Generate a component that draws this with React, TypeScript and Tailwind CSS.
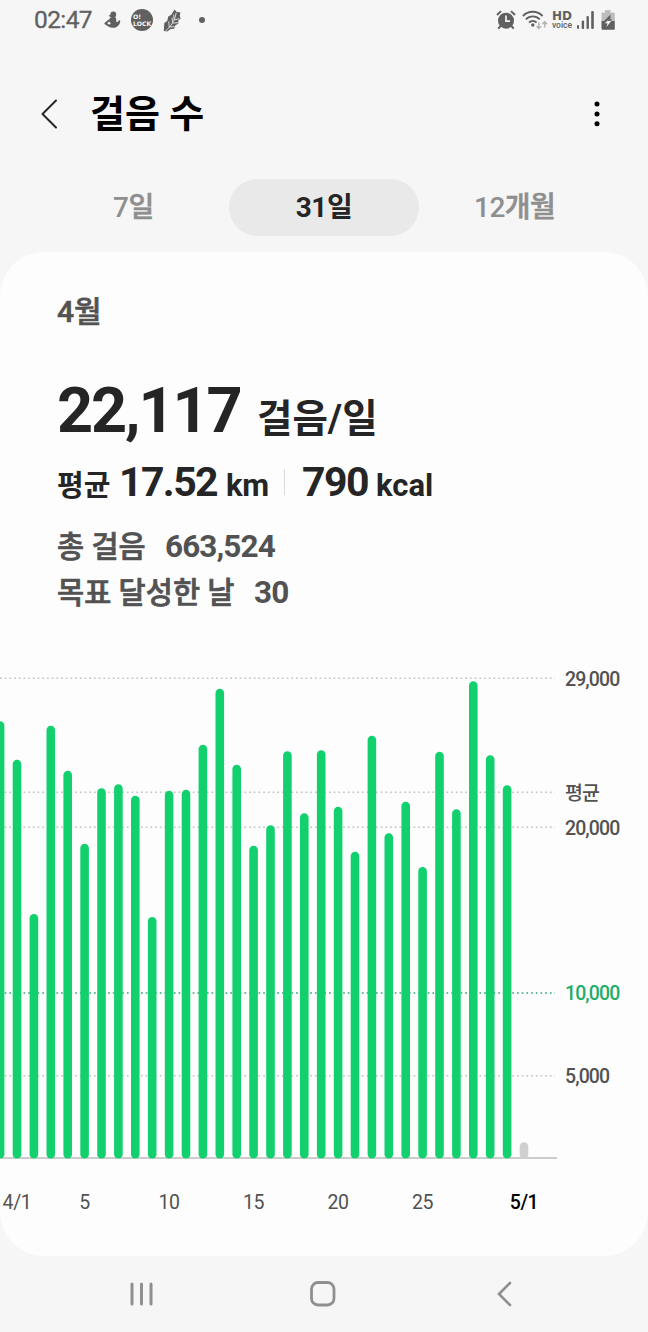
import { cx } from "class-variance-authority"

const TABS = [
  { count: "7", unit: "일" },
  { count: "31", unit: "일" },
  { count: "12", unit: "개월" },
]

// the first entry is March 31st, cut off by the left edge
const STEPS = [
  26400, 24080, 14770, 26130, 23410, 19000, 22360, 22600, 21900, 14590, 22210,
  22270, 24980, 28370, 23780, 18880, 20120, 24590, 20850, 24650, 21240, 18520,
  25530, 19640, 21540, 17610, 24560, 21090, 28820, 24350, 22540,
]

const GRID = [
  { value: 29000, label: "29,000" },
  { value: 22117, label: "평균" },
  { value: 20000, label: "20,000" },
  { value: 10000, label: "10,000", goal: true },
  { value: 5000, label: "5,000" },
]

const DAYS = [
  { day: 1, label: "4/1" },
  { day: 5, label: "5" },
  { day: 10, label: "10" },
  { day: 15, label: "15" },
  { day: 20, label: "20" },
  { day: 25, label: "25" },
  { day: 31, label: "5/1", current: true },
]

const BASE = 518.5
const dayX = (day: number) => 0.1 + day * 16.9
const stepY = (steps: number) => BASE - steps * 0.01656

function StatusBar() {
  return (
    <div className="flex h-10 items-center justify-between pr-[33px] pl-[34px] text-[#606060]">
      <div className="flex items-center">
        <span className="w-[70px] text-[24.5px] leading-10 tracking-[-0.6px] [-webkit-text-stroke:0.3px]">02:47</span>
        <svg className="h-[18px] w-[17px]" viewBox="0 0 17 18" fill="currentColor">
          <circle cx="9.3" cy="3.4" r="2.9" />
          <path d="M6.6 6.2 11 5.8c1.3 1.7 1.6 3.4 1.2 5 1.1.8 2.200-.1 2.600-1.500l1.400.3c.2 3-1.300 5-3.600 6.300-2.100 1.100-5.300 1.100-7.500.1L.8 13.300c-.7-.5-.4-1.400.2-1.900l4.700-3.700z" />
          <path d="m3.200 12.200 2.200-1.700 1.300 2.100-1.500 1.100z" fill="#f6f6f6" />
          <path d="m5.200 4.400 2.300 1.200" stroke="currentColor" strokeWidth="1.400" />
        </svg>
        <span className="ml-[10px] flex size-[22px] flex-col justify-center rounded-full bg-[#606060] pl-0.5 font-['DejaVu_Sans'] text-[6.2px] leading-[7px] font-bold text-[#f6f6f6]">
          <span>O!</span>
          <span>LOCK</span>
        </span>
        <svg className="ml-[10px] h-[23px] w-[19px]" viewBox="0 0 19 23" fill="currentColor">
          <path d="M11.500.6 13.500 2.800l3.900.6-.6 3.300.8 2.900-2.400 2.200.2 2.700-3.200 1.900-1 3.300-3.400.3-3.600 2.500L.8 22l.3-5.200.2-2.900 2.900-2 1.100-4.400 3-1.800z" />
          <path d="M2.400 22C7 18.500 11.600 12.800 13.200 3.700M6.200 17.900l-.4-5.600M9.500 14.100 9 8.600m2.200 2.100-.5-5M6.200 17.900l5.600-.2M9.600 14.100l5.400-.4M11.400 10.900l4.900-1.200" fill="none" stroke="#e6e6e6" strokeWidth=".9" />
        </svg>
        <span className="ml-[17px] size-1.5 rounded-full bg-[#606060]" />
      </div>
      <div className="flex items-center">
        <svg className="size-5" viewBox="0 0 20 20" fill="currentColor">
          <circle cx="10" cy="10.700" r="8" />
          <path d="m1 5 4-3.900M19 5l-4-3.900M5 15.500l-2.700 3.200M15 15.500l2.700 3.200" stroke="currentColor" strokeWidth="2" />
          <path d="M10 5.500v5.700h4" fill="none" stroke="#f6f6f6" strokeWidth="1.700" />
        </svg>
        <svg className="ml-[6px] h-5 w-[26px]" viewBox="0 0 26 20" fill="none" stroke="currentColor" strokeWidth="1.800">
          <path d="M.9 6.100C6 .3 15.500.3 20.600 6.100M3.800 9.400c4-4 10-4 14 0M7 12.500c2.200-2.100 5.400-2.100 7.600 0" />
          <circle cx="10.800" cy="15" r="1.700" fill="currentColor" stroke="none" />
          <path d="M16.800 12.600v6m-2.300-2.400 2.300 2.300 2.300-2.300M22.700 17.600v-6m-2.300 2.500 2.300-2.300 2.300 2.300" stroke="#b4b4b4" strokeWidth="1.500" />
        </svg>
        <span className="ml-1 flex w-[20px] flex-col items-center">
          <span className="font-['DejaVu_Sans'] text-[12px] leading-[9px] font-bold">HD</span>
          <span className="text-[8.500px] leading-[8px] font-medium">voice</span>
        </span>
        <svg className="ml-[5px] h-[18px] w-[17px]" viewBox="0 0 17 18" fill="currentColor">
          <rect y="14" width="2" height="4" rx="1" />
          <rect x="4.700" y="9.500" width="2.400" height="8.500" rx="1" />
          <rect x="9.500" y="5" width="2.400" height="13" rx="1" />
          <rect x="14.200" width="2.600" height="18" rx="1" />
        </svg>
        <svg className="ml-[7px] h-5 w-[14px]" viewBox="0 0 14 20">
          <path d="M4 0h5.500v2.400H13q.8 0 .8.800V11H.5V3.200q0-.8.800-.8H4z" fill="#bdbdbd" />
          <path d="M.5 11h13.300v7.700q0 1-1 1H1.500q-1 0-1-1z" fill="#606060" />
          <path d="M9.500 4.500 3 11h3.500V9.700l3-.7z" fill="#606060" />
          <path d="M6.800 9.500 11 9.200 9.700 11H6.500z" fill="#606060" />
          <path d="M6.300 11h3.900l-4.700 6 1-3.700H3.700z" fill="#f6f6f6" />
        </svg>
      </div>
    </div>
  )
}

function Header() {
  return (
    <header className="flex h-[139px] items-center pt-2 pr-[48px] pl-10">
      <svg className="h-[30px] w-[18px]" viewBox="0 0 18 30" fill="none" stroke="#252525" strokeWidth="2" strokeLinecap="round" strokeLinejoin="round">
        <path d="M16 1.500 2.500 15 16 28.500" />
      </svg>
      <h1 className="ml-8 text-[38px] leading-[48px] font-bold text-black">걸음 수</h1>
      <svg className="ml-auto h-[26px] w-[6px]" viewBox="0 0 6 26" fill="#000">
        <circle cx="3" cy="3" r="2.500" />
        <circle cx="3" cy="13" r="2.500" />
        <circle cx="3" cy="22.800" r="2.500" />
      </svg>
    </header>
  )
}

function Tabs() {
  return (
    <nav className="grid h-[57px] grid-cols-3 px-[38px]">
      {TABS.map(({ count, unit }, i) => (
        <button
          key={count}
          className={cx(
            "rounded-full pt-px text-[28px] leading-[56px] tracking-[-0.5px]",
            i === 1 ? "bg-[#e9e9e9] font-bold text-[#252525]" : "font-medium text-[#8f8f8f]"
          )}
        >
          {count}
          <span className={i === 1 ? "" : "[-webkit-text-stroke:0.6px]"}>{unit}</span>
        </button>
      ))}
    </nav>
  )
}

function Summary() {
  return (
    <section className="px-[57px] pt-10">
      <h2 className="text-[30px] leading-10 font-medium text-[#525252] [-webkit-text-stroke:0.6px]">4월</h2>
      <div className="mt-[43px] flex h-[72px] items-baseline font-bold text-[#252525]">
        <span className="w-[200px] text-[63px] leading-[72px] tracking-[-2.1px]">22,117</span>
        <span className="text-[38.500px] leading-none">걸음/일</span>
      </div>
      <div className="mt-[11px] flex h-12 items-baseline font-bold text-[#252525]">
        <span className="w-[62px] text-[29px] leading-none">평균</span>
        <span className="w-[107px] text-[41px] leading-[48px] tracking-[-1.6px]">17.52</span>
        <span className="w-[58px] text-[31px] leading-none tracking-[-0.3px]">km</span>
        <span className="h-[26px] w-px self-center bg-[#dcdcdc]" />
        <span className="ml-[17px] w-[74px] text-[41px] leading-[48px] tracking-[-1.500px]">790</span>
        <span className="text-[31px] leading-none">kcal</span>
      </div>
      <div className="mt-[18px] flex h-[46px] items-baseline text-[#525252]">
        <span className="w-[108px] text-[29.500px] leading-none font-medium [-webkit-text-stroke:0.7px]">총 걸음</span>
        <span className="text-[31.500px] leading-[46px] font-bold tracking-[-0.9px]">663,524</span>
      </div>
      <div className="flex h-[46px] items-baseline text-[#525252]">
        <span className="w-[197px] text-[29.500px] leading-none font-medium [-webkit-text-stroke:0.7px]">목표 달성한 날</span>
        <span className="text-[31.500px] leading-[46px] font-bold tracking-[-0.9px]">30</span>
      </div>
    </section>
  )
}

function Chart() {
  return (
    <svg className="mt-6 h-[590px] w-full" viewBox="0 0 648 590">
      {GRID.map(({ value, label, goal }) => (
        <g key={label}>
          <line
            x1="0"
            x2="555"
            y1={stepY(value)}
            y2={stepY(value)}
            stroke={goal ? "#35a877" : "#c4c4c4"}
            strokeWidth="1.5"
            strokeDasharray="1.7 3"
          />
          <text
            x="565"
            y={stepY(value) + 7.5}
            className={cx("text-[19.5px] font-medium tracking-[-0.9px]", goal ? "fill-[#1fae69]" : "fill-[#525252]")}
          >
            {label}
          </text>
        </g>
      ))}
      <line x1="0" x2="557" y1="518" y2="518" stroke="#cccccc" strokeWidth="1.8" />
      {STEPS.map((steps, i) => (
        <rect
          key={i}
          x={dayX(i) - 4.3}
          y={stepY(steps)}
          width="8.6"
          height={steps * 0.01656}
          rx="4.3"
          fill="#13d06f"
        />
      ))}
      <rect x={dayX(31) - 4.3} y="502.3" width="8.6" height="16.2" rx="4.3" fill="#d0d0d0" />
      {DAYS.map(({ day, label, current }) => (
        <text
          key={label}
          x={dayX(day)}
          y="568.5"
          textAnchor="middle"
          className={cx("text-[19.5px] tracking-[-0.4px]", current ? "fill-black font-medium" : "fill-[#525252]")}
        >
          {label}
        </text>
      ))}
    </svg>
  )
}

function NavBar() {
  return (
    <div className="flex h-[76px] items-center pl-[130px] text-[#8f8f8f]">
      <svg className="h-6 w-6" viewBox="0 0 24 24" stroke="currentColor" strokeWidth="3" strokeLinecap="round">
        <path d="M2 2v20M11.5 2v20M21 2v20" />
      </svg>
      <svg className="ml-[156px] h-[26px] w-[26px]" viewBox="0 0 26 26" fill="none" stroke="currentColor" strokeWidth="2.8">
        <rect x="1.5" y="1.5" width="22.5" height="22.5" rx="6.5" />
      </svg>
      <svg className="ml-[161px] h-[26px] w-[15px]" viewBox="0 0 15 26" fill="none" stroke="currentColor" strokeWidth="2.6" strokeLinecap="round">
        <path d="M13 2 2 13l11 11" />
      </svg>
    </div>
  )
}

export default function App() {
  return (
    <div className="flex h-[1332px] w-[648px] flex-col overflow-hidden bg-[#f6f6f6] font-['Roboto','Noto_Sans_CJK_KR',sans-serif]">
      <StatusBar />
      <Header />
      <Tabs />
      <main className="mt-4 h-[1004px] rounded-[44px] bg-[#fdfdfd]">
        <Summary />
        <Chart />
      </main>
      <NavBar />
    </div>
  )
}
